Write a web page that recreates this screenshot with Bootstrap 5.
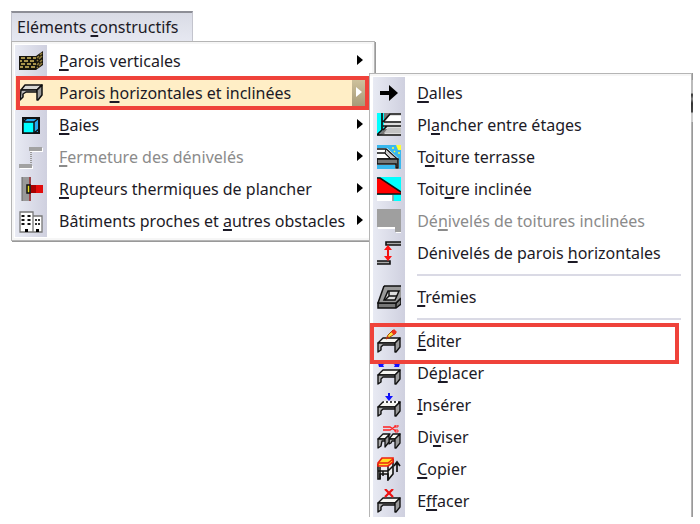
<!DOCTYPE html>
<html lang="fr">
<head>
<meta charset="utf-8">
<meta name="viewport" content="width=device-width, initial-scale=1">
<title>Eléments constructifs</title>
<link href="https://cdn.jsdelivr.net/npm/bootstrap@5.3.0/dist/css/bootstrap.min.css" rel="stylesheet">
<style>
body{font-family:"Noto Sans","Open Sans",sans-serif;font-size:16px;color:#1c1a26;background:#fff}
.menu-title{margin:0 0 0 11px;height:30px;padding:0 14px 0 5px;border:1px solid #c3c4cd;border-top:2px solid #8d8e96;border-bottom:0;background:linear-gradient(#d9dbe5,#e6e8f1);color:inherit;line-height:28px}
.menu-area{padding-top:11px}
.dropdown-menu.panel{--bs-dropdown-min-width:0;margin:0;padding:3px;border:1px solid #b5b5b5;border-radius:0;background:#fff;font-size:16px;color:inherit;box-shadow:inset 0 0 0 2px #f6f6f6,1px 1px 0 #999}
.panel.main-panel{margin-left:11px;width:max-content;position:relative}
.panel.sub-panel{left:100%;top:-4px;margin-left:-2px;width:max-content;border-bottom:0;padding-bottom:0;z-index:5;box-shadow:inset 0 2px 0 #f6f6f6,1px 0 0 #999}
.sub-panel::after{content:"";position:absolute;left:100%;top:6px;width:2px;height:42px;background:linear-gradient(#bbb 30%,#333 35%,#888 45%,#333 55%,#444 75%,#ccc 80%)}
.panel li{background:linear-gradient(90deg,#e8eaf3,#cfd0df) left/32px 100% no-repeat}
.panel .dropdown-item{height:32px;padding:0 0 0 4px;color:inherit;line-height:32px}
.panel .dropdown-item:hover{background:transparent}
.panel .dropdown-item svg{flex:none;width:24px;height:24px;margin-right:16px}
.panel .dropdown-item.off{color:#8b8b8b}
.sub-panel .dropdown-item{padding-right:27px}
.arrow-cell{margin-left:auto;padding-left:8px;align-self:stretch;display:flex;align-items:center}
.arrow-cell::after{content:"";margin:0 8px 3px 4px;border:5px solid transparent;border-left:6px solid #000;border-right:0}
.main-panel .dropdown-item.chosen{background:#ffeec6}
.chosen .arrow-cell{margin-right:5px;padding-left:0;background:linear-gradient(#d2c6a0,#a39674)}
.chosen .arrow-cell::after{margin-right:4px;border-left-color:#fff}
.framed::after{content:"";position:absolute;border:4px solid #ef423a;pointer-events:none}
.frame-row::after{inset:-1px 2px -1px 1px}
.frame-edit::after{inset:-2px 9px -7px -3px}
.panel .split{height:12px;padding:5px 7px 5px 44px}
.split hr{margin:0;border-top:2px solid #dadae5;opacity:1}
u{text-decoration-thickness:2px;text-underline-offset:2px;text-decoration-skip-ink:none}
</style>
<script src="https://cdn.jsdelivr.net/npm/bootstrap@5.3.0/dist/js/bootstrap.bundle.min.js"></script>
</head>
<body>
<svg class="d-none">
<symbol id="slab" viewBox="0 0 24 24"><g stroke="#111" stroke-width="1.4" stroke-linejoin="round"><path d="M6 9H23L18 14H1Z" fill="#f6f6f2"/><path d="M1 14H18V16H6L4 18V21L1 23Z" fill="#aaa"/><path d="M18 14L23 9V18L19 23H18Z" fill="#999"/></g></symbol>
</svg>
<nav class="menu-area min-vh-100" aria-label="Eléments constructifs">
<button class="menu-title d-block" type="button">Eléments <u>c</u>onstructifs</button>
<ul class="dropdown-menu show panel main-panel">
<li><button type="button" class="dropdown-item d-flex align-items-center"><svg viewBox="0 0 24 24"><path d="M0 7H17L24 2V16L17 21H0Z" fill="#17150d"/><path d="M2 9h4M8 9h4M14 9h3M1 12h2M5 12h4M11 12h4M2 15h4M8 15h4M14 15h3M1 18h3M6 18h4M12 18h4" stroke="#d8bd62" stroke-width="1.6"/><path d="M18 9l2-2M21 6l2-2M18 12l1-1M20 10l3-3M18 16l2-2M21 13l2-2M18 19l1-1M20 17l3-3" stroke="#927e3c" stroke-width="1.6"/></svg><span><u>P</u>arois verticales</span><span class="arrow-cell"></span></button></li>
<li class="position-relative framed frame-row"><button type="button" class="dropdown-item chosen d-flex align-items-center"><svg viewBox="0 0 24 24"><g stroke="#111" stroke-width="1.5" stroke-linejoin="round"><path d="M6 4H23L18 9H2Z" fill="#d8d8d5"/><path d="M2 9H18V11H7L4 13V16L1 19Z" fill="#bbb"/><path d="M18 9L23 4V14L19 19H18Z" fill="#999"/></g></svg><span>Parois <u>h</u>orizontales et inclinées</span><span class="arrow-cell"></span></button>
<ul class="dropdown-menu show panel sub-panel">
<li><button type="button" class="dropdown-item d-flex align-items-center"><svg viewBox="0 0 24 24"><path d="M3 10H12V4L21 12L12 20V14H3Z"/></svg><span><u>D</u>alles</span></button></li>
<li><button type="button" class="dropdown-item d-flex align-items-center"><svg viewBox="0 0 24 24"><path d="M0 0H7V16L0 23Z" fill="#0ff"/><path d="M7 0H24V23H1L7 16Z" fill="#ddd"/><path d="M7 0h6L7 8ZM1 23l6-7h5l-5 5Z" fill="#777"/><path d="M12 3H24V8H9Z" fill="#fff"/><path d="M5 0V17L0 22H24M6 9L13 1H24M7 9H24M6 13H24M6 17L10 13" fill="none" stroke="#111" stroke-width="1.7"/><path d="M11 15H24V20H7Z" fill="#c4c4c4"/></svg><span>Pl<u>a</u>ncher entre étages</span></button></li>
<li><button type="button" class="dropdown-item d-flex align-items-center"><svg viewBox="0 0 24 24"><path d="M0 0H24V24H0Z" fill="#39b8ee"/><path d="M0 3H10L22 14V24H18V20H0Z" fill="#fff"/><path d="M0 4H9L20 14H0M0 8H8L14 14" fill="none" stroke="#111" stroke-width="1.6"/><path d="M9 4L20 14H14L8 8Z" fill="#ccc" stroke="#111"/><path d="M0 14H21V23H19V19H0Z" fill="#777" stroke="#111" stroke-width="1.5"/><path d="M19 0h5v5h-3Z" fill="#ff3"/><path d="M16 2v2M18 6l-1 1M22 7v2" stroke="#ff3" stroke-width="1.5"/></svg><span>T<u>o</u>iture terrasse</span></button></li>
<li><button type="button" class="dropdown-item d-flex align-items-center"><svg viewBox="0 0 24 24"><path d="M0 0H24V24H16V18H0Z" fill="#0ff"/><path d="M0 18H15V24H0Z" fill="#fff"/><path d="M0 1H3L24 15V17H0Z" fill="#f00"/><path d="M0 1H3L24 15M0 17H24" fill="none" stroke="#111" stroke-width="1.6"/><path d="M16 18V24" stroke="#999" stroke-width="1.6"/></svg><span>Toit<u>u</u>re inclinée</span></button></li>
<li><button type="button" class="dropdown-item off d-flex align-items-center"><svg viewBox="0 0 24 24"><path d="M1 1H24V24H19V20H1Z" fill="#fff"/><path d="M0 0H24V23H18V18H0Z" fill="#9f9f9f"/></svg><span>Dé<u>n</u>ivelés de toitures inclinées</span></button></li>
<li><button type="button" class="dropdown-item d-flex align-items-center"><svg viewBox="0 0 24 24"><path d="M24 1H9V4H24M0 20H13V23H0M13 20V23" fill="#aaa" stroke="#111" stroke-width="1.6"/><path d="M11 8V17" stroke="#e11" stroke-width="2"/><path d="M7 9L11 4L15 9ZM7 15H15L11 20Z" fill="#f11"/></svg><span>Dénivelés de parois <u>h</u>orizontales</span></button></li>
<li class="split"><hr></li>
<li><button type="button" class="dropdown-item d-flex align-items-center"><svg viewBox="0 0 24 24"><path d="M1 18H19L24 13V19L19 23H1Z" fill="#777" stroke="#111" stroke-width="1.5"/><path d="M7 1H24V13L19 18H1Z" fill="#999"/><path d="M7 1H24M7 1L1 18H19L24 13M19 18V23" fill="none" stroke="#111" stroke-width="1.5"/><path d="M11 6H22L18 15H7Z" fill="#ddd" stroke="#111" stroke-width="1.5"/><path d="M12 6V11H20M12 11L8 15" fill="none" stroke="#111" stroke-width="1.5"/></svg><span><u>T</u>rémies</span></button></li>
<li class="split"><hr></li>
<li class="position-relative framed frame-edit"><button type="button" class="dropdown-item d-flex align-items-center"><svg viewBox="0 0 24 24"><use href="#slab"/><path d="M9 10L11 6L16 1L19 4L13 8Z" fill="#ffe23a" stroke="#a40" stroke-width="1"/><path d="M14 3L17 0L20 3L17 6Z" fill="#e32"/><path d="M9 10L11 7L12 9Z" fill="#a22"/></svg><span><u>É</u>diter</span></button></li>
<li><button type="button" class="dropdown-item d-flex align-items-center"><svg viewBox="0 0 24 24"><use href="#slab"/><path d="M1 2H9L6 4L7 6L2 6ZM23 2H15L18 4L17 6L22 6Z" fill="#11f"/></svg><span>Dé<u>p</u>lacer</span></button></li>
<li><button type="button" class="dropdown-item d-flex align-items-center"><svg viewBox="0 0 24 24"><use href="#slab"/><path d="M7 9H21" stroke="#fff" stroke-width="2" stroke-dasharray="2 2"/><path d="M12 0V4" stroke="#11e" stroke-width="2"/><path d="M8 3H16L12 8Z" fill="#11f"/></svg><span><u>I</u>nsérer</span></button></li>
<li><button type="button" class="dropdown-item d-flex align-items-center"><svg viewBox="0 0 24 24"><g stroke="#111" stroke-width="1.3" stroke-linejoin="round"><path d="M6 9H13L8 14H1ZM16 9H23L18 14H12Z" fill="#f6f6f2"/><path d="M1 14H8V16H5L4 21L1 23ZM12 14H18V16H15L14 18L12 19Z" fill="#aaa"/><path d="M8 14L12 10V17L8 22ZM18 14L23 9V18L19 23H18Z" fill="#999"/></g><path d="M6 2H13L19 6M6 5H13L19 1" fill="none" stroke="#f22" stroke-width="1.5"/><path d="M18 0h3v2h-3ZM18 5h3v2h-3Z" fill="none" stroke="#f22"/></svg><span>Di<u>v</u>iser</span></button></li>
<li><button type="button" class="dropdown-item d-flex align-items-center"><svg viewBox="0 0 24 24"><path d="M1 7V22H3V17H11V23L16 17V2" fill="#eee" stroke="#111" stroke-width="1.6"/><path d="M1 14H11L16 9M11 7V23M3 10V22M6 14V19" fill="none" stroke="#111" stroke-width="1.5"/><path d="M5 1H16V5L11 9H1V6Z" fill="#ffdf22" stroke="#e21" stroke-width="1.7"/><path d="M1 6H11L16 2" fill="none" stroke="#e21" stroke-width="1.5"/><path d="M20 15V6M17 9L20 5L23 9" fill="none" stroke="#111" stroke-width="1.7"/></svg><span><u>C</u>opier</span></button></li>
<li><button type="button" class="dropdown-item d-flex align-items-center"><svg viewBox="0 0 24 24"><use href="#slab"/><path d="M8 0L16 8M16 0L8 8" stroke="#e11" stroke-width="2.2"/></svg><span>E<u>f</u>facer</span></button></li>
</ul></li>
<li><button type="button" class="dropdown-item d-flex align-items-center"><svg viewBox="0 0 24 24"><path d="M4 5H20V20H4Z" fill="#28a8ee" stroke="#111" stroke-width="2"/><path d="M4 9L8 5M4 9H15V20H4Z" fill="#0ff" stroke="#111" stroke-width="1.5"/><path d="M15 9L20 5M15 20L20 16" stroke="#111" stroke-width="1.5"/></svg><span><u>B</u>aies</span><span class="arrow-cell"></span></button></li>
<li><button type="button" class="dropdown-item off d-flex align-items-center"><svg viewBox="0 0 24 24"><path d="M11 3H24V7H11ZM1 21H14V25H1Z" fill="#fff"/><path d="M10 2H23V6H10ZM0 19H13V23H0Z" fill="#a2a2a2"/><path d="M12 7V18" stroke="#999" stroke-width="2" stroke-dasharray="1 1"/></svg><span><u>F</u>ermeture des dénivelés</span><span class="arrow-cell"></span></button></li>
<li><button type="button" class="dropdown-item d-flex align-items-center"><svg viewBox="0 0 24 24"><path d="M3 0H10V24H3Z" fill="#999"/><path d="M3 0V24" stroke="#666"/><path d="M11 0V24" stroke="#811" stroke-width="1.5"/><path d="M12 8H24V16H12Z" fill="#e20b0b"/><path d="M12 8H17V16H12Z" fill="#a00"/><path d="M8 8H11V16H8Z" fill="#ed2" stroke="#111" stroke-width="1.5"/></svg><span><u>R</u>upteurs thermiques de plancher</span><span class="arrow-cell"></span></button></li>
<li><button type="button" class="dropdown-item d-flex align-items-center"><svg viewBox="0 0 24 24"><path d="M1 3H14V23H1ZM14 7H23V23H14Z" fill="#fff" stroke="#777" stroke-width="1.3"/><path d="M4 6V18M10 6V18" stroke="#111" stroke-width="3" stroke-dasharray="2 2"/><path d="M17 10V18M20 10V18" stroke="#111" stroke-width="1.7" stroke-dasharray="2 2"/><path d="M6 20H9V23H6ZM17 20H20V23H17Z"/></svg><span>Bâtiments proches et <u>a</u>utres obstacles</span><span class="arrow-cell"></span></button></li>
</ul>
</nav>
</body>
</html>
